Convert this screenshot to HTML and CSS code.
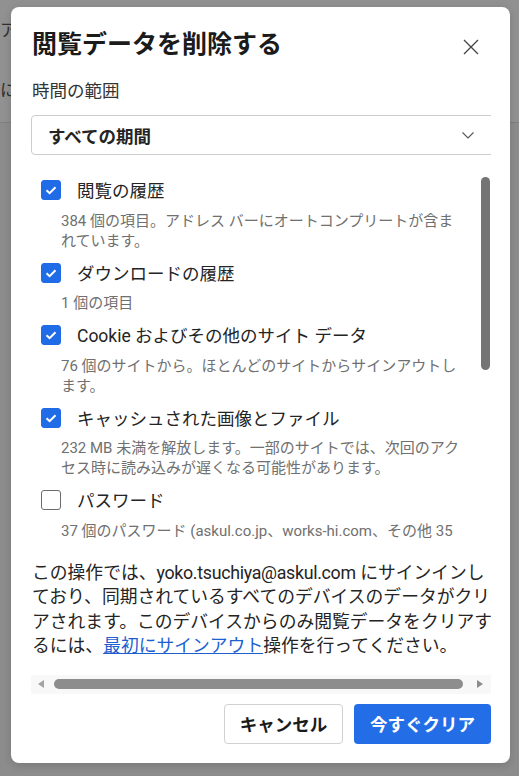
FILE: index.html
```html
<!DOCTYPE html>
<html lang="ja">

<head>
    <meta charset="UTF-8">
    <meta name="viewport" content="width=device-width, initial-scale=1.0">
    <title>閲覧データを削除する</title>
    <link rel="stylesheet" href="styles.css">
</head>

<body>
    <div class="page">
        <p class="page-line first">アカウント</p>
        <p class="page-line">にサインイン</p>
    </div>

    <div class="dialog">
        <div class="dialog-head">
            <h1 class="title">閲覧データを削除する</h1>
            <span class="close">
                <svg width="16" height="16" viewBox="0 0 16 16"><path d="M1 1L15 15M15 1L1 15" stroke="#444" stroke-width="1.3" fill="none"/></svg>
            </span>
        </div>

        <div class="dialog-body">
            <div class="range-label">時間の範囲</div>
            <div class="select">
                <span>すべての期間</span>
                <svg width="12" height="7" viewBox="0 0 12 7"><path d="M0.5 0.5L6 6L11.5 0.5" stroke="#555" stroke-width="1.1" fill="none"/></svg>
            </div>

            <div class="list">
                <div class="item">
                    <div class="row">
                        <span class="check on"><svg width="20" height="20" viewBox="0 0 20 20"><path d="M5.5 10.2L8.6 13.2L14.5 7.2" stroke="#fff" stroke-width="2" fill="none"/></svg></span>
                        <span class="label">閲覧の履歴</span>
                    </div>
                    <p class="desc">384 個の項目。アドレス バーにオートコンプリートが含まれています。</p>
                </div>
                <div class="item">
                    <div class="row">
                        <span class="check on"><svg width="20" height="20" viewBox="0 0 20 20"><path d="M5.5 10.2L8.6 13.2L14.5 7.2" stroke="#fff" stroke-width="2" fill="none"/></svg></span>
                        <span class="label">ダウンロードの履歴</span>
                    </div>
                    <p class="desc">1 個の項目</p>
                </div>
                <div class="item">
                    <div class="row">
                        <span class="check on"><svg width="20" height="20" viewBox="0 0 20 20"><path d="M5.5 10.2L8.6 13.2L14.5 7.2" stroke="#fff" stroke-width="2" fill="none"/></svg></span>
                        <span class="label">Cookie およびその他のサイト データ</span>
                    </div>
                    <p class="desc">76 個のサイトから。ほとんどのサイトからサインアウトします。</p>
                </div>
                <div class="item">
                    <div class="row">
                        <span class="check on"><svg width="20" height="20" viewBox="0 0 20 20"><path d="M5.5 10.2L8.6 13.2L14.5 7.2" stroke="#fff" stroke-width="2" fill="none"/></svg></span>
                        <span class="label">キャッシュされた画像とファイル</span>
                    </div>
                    <p class="desc">232 MB 未満を解放します。一部のサイトでは、次回のアクセス時に読み込みが遅くなる可能性があります。</p>
                </div>
                <div class="item">
                    <div class="row">
                        <span class="check"></span>
                        <span class="label">パスワード</span>
                    </div>
                    <p class="desc">37 個のパスワード (askul.co.jp、works-hi.com、その他 35 個のサイト)</p>
                </div>
                <span class="vthumb"></span>
            </div>

            <p class="note">この操作では、<span class="account">yoko.tsuchiya@askul.com</span> にサインインし<br>ており、同期されているすべてのデバイスのデータがクリ<br>アされます。このデバイスからのみ閲覧データをクリアす<br>るには、<a href="#">最初にサインアウト</a>操作を行ってください。</p>

            <div class="hscroll">
                <span class="arrow left"></span>
                <span class="hthumb"></span>
                <span class="arrow right"></span>
            </div>
        </div>

        <div class="buttons">
            <button class="btn cancel">キャンセル</button>
            <button class="btn primary">今すぐクリア</button>
        </div>
    </div>
</body>

</html>
```

FILE: styles.css
```css
html,
body {
    margin: 0;
    padding: 0;
}

body {
    width: 519px;
    height: 776px;
    overflow: hidden;
    background-color: #8c8c8c;
    font-family: Roboto, "Noto Sans CJK JP", sans-serif;
    position: relative;
}

.page {
    height: 122px;
    border-bottom: 1px solid #7f7f7f;
    background-color: #919191;
}

.page-line {
    margin: 0;
    color: #2e2e2e;
    font-size: 17px;
    line-height: 24px;
    white-space: nowrap;
}

.page-line.first {
    padding-top: 18px;
    margin-bottom: 36px;
}

.dialog {
    position: absolute;
    left: 11px;
    top: 7px;
    width: 499px;
    height: 756px;
    box-sizing: border-box;
    padding: 22px 19px 19px 20px;
    background-color: #fff;
    border-radius: 8px;
    box-shadow: 0 2px 8px rgba(0, 0, 0, 0.15);
}

.dialog-head {
    display: flex;
    justify-content: space-between;
    align-items: center;
    height: 32px;
}

.title {
    margin: 0;
    padding-left: 1px;
    font-size: 25px;
    line-height: 32px;
    font-weight: 700;
    color: #1b1b1b;
}

.close {
    display: flex;
    margin-right: 12px;
    margin-top: 3px;
}

.dialog-body {
    width: 460px;
    overflow: hidden;
}

.range-label {
    margin-top: 18px;
    padding-left: 1px;
    font-size: 17.5px;
    line-height: 24px;
    color: #333;
}

.select {
    display: flex;
    align-items: center;
    justify-content: space-between;
    margin-top: 12px;
    width: 478px;
    height: 40px;
    box-sizing: border-box;
    padding: 0 34px 0 16px;
    border: 1px solid #cdcdcd;
    border-radius: 4px;
    font-size: 17.5px;
    font-weight: 700;
    color: #242424;
}

.list {
    position: relative;
    margin-top: 15px;
    height: 370px;
    box-sizing: border-box;
    padding: 10px 30px 0 10px;
    overflow: hidden;
}

.item {
    margin-bottom: 12px;
}

.row {
    display: flex;
    align-items: flex-start;
    height: 22px;
}

.check {
    flex: none;
    display: block;
    width: 20px;
    height: 20px;
    box-sizing: border-box;
    border: 1px solid #6b6b6b;
    border-radius: 3px;
    background-color: #fff;
}

.check svg {
    display: block;
    margin: -1px;
}

.check.on {
    border-color: #1f6ce6;
    background-color: #1f6ce6;
}

.label {
    margin-left: 16px;
    font-size: 17.5px;
    line-height: 22px;
    color: #242424;
    white-space: nowrap;
}

.desc {
    margin: 8.5px 0 0 20px;
    font-size: 15px;
    line-height: 20px;
    color: #707070;
}

.vthumb {
    position: absolute;
    right: 1px;
    top: 7px;
    width: 9px;
    height: 193px;
    border-radius: 5px;
    background-color: #747474;
}

.note {
    margin: 21px 0 0;
    padding-left: 1px;
    font-size: 17.8px;
    line-height: 24.4px;
    color: #242424;
    white-space: nowrap;
}

.note .account {
    letter-spacing: -0.3px;
}

.note a {
    color: #1d5fd1;
}

.hscroll {
    display: flex;
    align-items: center;
    margin-top: 16px;
    height: 19px;
    background-color: #f8f8f8;
}

.arrow {
    width: 0;
    height: 0;
    border-top: 4px solid transparent;
    border-bottom: 4px solid transparent;
}

.arrow.left {
    margin-left: 7px;
    border-right: 6px solid #a3a3a3;
}

.arrow.right {
    margin-left: 14px;
    border-left: 6px solid #8d8d8d;
}

.hthumb {
    margin-left: 10px;
    width: 409px;
    height: 10px;
    border-radius: 5px;
    background-color: #8d8d8d;
}

.buttons {
    display: flex;
    justify-content: flex-end;
    gap: 11px;
    margin-top: 10px;
}

.btn {
    height: 40px;
    border-radius: 4px;
    font-family: Roboto, "Noto Sans CJK JP", sans-serif;
    font-size: 17.5px;
    font-weight: 700;
    cursor: pointer;
}

.btn.cancel {
    width: 119px;
    border: 1px solid #d1d1d1;
    background-color: #fff;
    color: #1b1b1b;
}

.btn.primary {
    width: 137px;
    border: none;
    background-color: #236ee6;
    color: #fff;
}
```
